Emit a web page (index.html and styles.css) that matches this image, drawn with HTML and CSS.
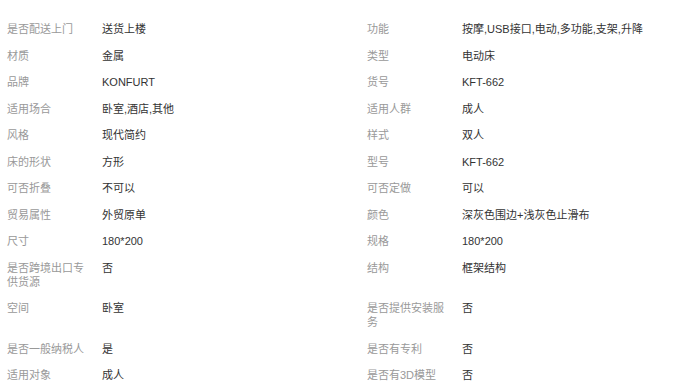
FILE: index.html
```html
<!DOCTYPE html>
<html lang="zh-CN">
<head>
<meta charset="utf-8">
<title>商品属性</title>
<link rel="stylesheet" href="styles.css">
</head>
<body>
<div class="attrs">
  <div class="label">是否配送上门</div><div class="value">送货上楼</div>
  <div class="label">功能</div><div class="value">按摩,USB接口,电动,多功能,支架,升降</div>

  <div class="label">材质</div><div class="value">金属</div>
  <div class="label">类型</div><div class="value">电动床</div>

  <div class="label">品牌</div><div class="value">KONFURT</div>
  <div class="label">货号</div><div class="value">KFT-662</div>

  <div class="label">适用场合</div><div class="value">卧室,酒店,其他</div>
  <div class="label">适用人群</div><div class="value">成人</div>

  <div class="label">风格</div><div class="value">现代简约</div>
  <div class="label">样式</div><div class="value">双人</div>

  <div class="label">床的形状</div><div class="value">方形</div>
  <div class="label">型号</div><div class="value">KFT-662</div>

  <div class="label">可否折叠</div><div class="value">不可以</div>
  <div class="label">可否定做</div><div class="value">可以</div>

  <div class="label">贸易属性</div><div class="value">外贸原单</div>
  <div class="label">颜色</div><div class="value">深灰色围边+浅灰色止滑布</div>

  <div class="label">尺寸</div><div class="value">180*200</div>
  <div class="label">规格</div><div class="value">180*200</div>

  <div class="label">是否跨境出口专供货源</div><div class="value">否</div>
  <div class="label">结构</div><div class="value">框架结构</div>

  <div class="label">空间</div><div class="value">卧室</div>
  <div class="label">是否提供安装服务</div><div class="value">否</div>

  <div class="label">是否一般纳税人</div><div class="value">是</div>
  <div class="label">是否有专利</div><div class="value">否</div>

  <div class="label">适用对象</div><div class="value">成人</div>
  <div class="label">是否有3D模型</div><div class="value">否</div>
</div>
</body>
</html>
```
FILE: styles.css
```css
html, body {
  margin: 0;
  padding: 0;
  background: #fff;
}

body {
  font-family: "Liberation Sans", "Noto Sans CJK SC", sans-serif;
  font-size: 11px;
  line-height: 14px;
}

.attrs {
  display: grid;
  grid-template-columns: 95px 265px 95px 1fr;
  padding: 15.75px 0 0 7px;
}

.label,
.value {
  padding: 6.25px 0;
}

.label {
  color: #999;
  padding-right: 10px;
}

.value {
  color: #333;
}
```
